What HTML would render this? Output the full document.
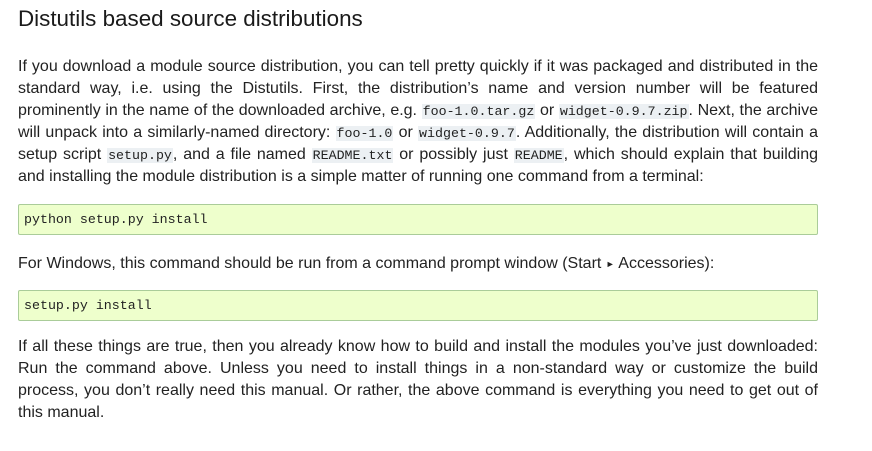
<!DOCTYPE html>
<html><head><meta charset="utf-8"><style>
html,body{margin:0;padding:0;background:#fff;}
body{width:872px;height:451px;overflow:hidden;font-family:"Liberation Sans",Arial,sans-serif;color:#222;}
.w{position:absolute;left:18px;width:800px;}
h1{position:absolute;left:18px;top:5px;margin:0;font-weight:normal;font-size:22.4px;color:#1a1a1a;line-height:28px;white-space:nowrap;}
.l{display:block;font-size:16px;line-height:22px;height:22px;text-align:justify;text-align-last:justify;white-space:nowrap;}
.l.e{text-align-last:left;}
code{font-family:"Liberation Mono",monospace;font-size:13.3px;background:#ecf0f3;padding:0 1px;}
.pre{position:absolute;left:18px;width:793px;height:29px;background:#eeffcc;border:1px solid #ac9;border-radius:2px;padding-left:5px;font-family:"Liberation Mono",monospace;font-size:13.3px;line-height:29px;color:#222;}
</style></head><body>
<h1>Distutils based source distributions</h1>
<div class="w" style="top:56px">
<span class="l">If you download a module source distribution, you can tell pretty quickly if it was packaged and distributed in the</span>
<span class="l">standard way, i.e. using the Distutils. First, the distribution’s name and version number will be featured</span>
<span class="l">prominently in the name of the downloaded archive, e.g. <code>foo-1.0.tar.gz</code> or <code>widget-0.9.7.zip</code>. Next, the archive</span>
<span class="l">will unpack into a similarly-named directory: <code>foo-1.0</code> or <code>widget-0.9.7</code>. Additionally, the distribution will contain a</span>
<span class="l">setup script <code>setup.py</code>, and a file named <code>README.txt</code> or possibly just <code>README</code>, which should explain that building</span>
<span class="l e">and installing the module distribution is a simple matter of running one command from a terminal:</span>
</div>
<div class="pre" style="top:204px">python setup.py install</div>
<div class="w" style="top:253px"><span class="l e">For Windows, this command should be run from a command prompt window (Start <span style="font-size:9px;vertical-align:1px">&#9658;</span> Accessories):</span></div>
<div class="pre" style="top:290px">setup.py install</div>
<div class="w" style="top:336px">
<span class="l">If all these things are true, then you already know how to build and install the modules you’ve just downloaded:</span>
<span class="l">Run the command above. Unless you need to install things in a non-standard way or customize the build</span>
<span class="l">process, you don’t really need this manual. Or rather, the above command is everything you need to get out of</span>
<span class="l e">this manual.</span>
</div>
</body></html>
